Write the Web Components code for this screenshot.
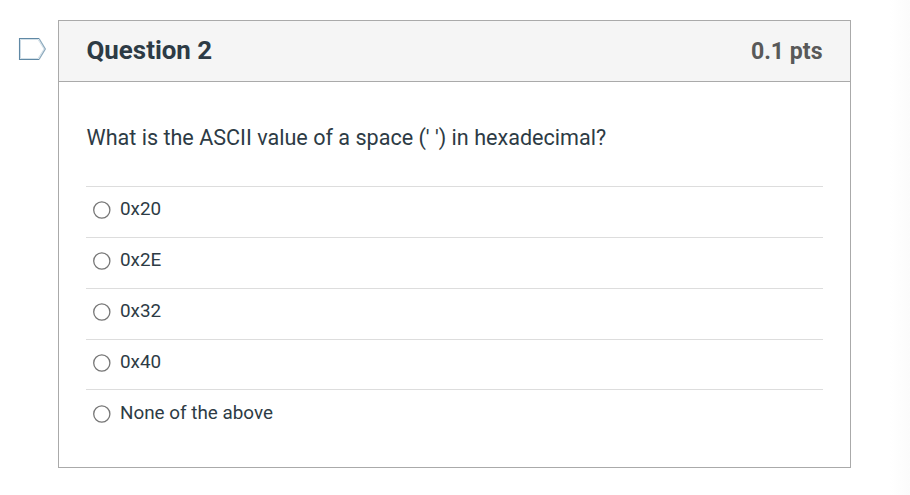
<!DOCTYPE html>
<html lang="en"><head><meta charset="utf-8"><title>Quiz</title>
<style>
body{margin:0;background:#fff;color:#2d3b45;font-family:Roboto,"Liberation Sans",sans-serif;overflow:hidden}
</style></head><body>
<quiz-page>
<quiz-question name="Question 2" points="0.1 pts">
What is the ASCII value of a space (' ') in hexadecimal?
<quiz-answer slot="answers">0x20</quiz-answer>
<quiz-answer slot="answers">0x2E</quiz-answer>
<quiz-answer slot="answers">0x32</quiz-answer>
<quiz-answer slot="answers">0x40</quiz-answer>
<quiz-answer slot="answers">None of the above</quiz-answer>
</quiz-question>
</quiz-page>
<script>
class Base extends HTMLElement{
  connectedCallback(){ if(!this.shadowRoot) this.attachShadow({mode:'open'}).innerHTML=this.view(); }
}
customElements.define('quiz-page',class extends Base{view(){return `
<style>:host{display:grid;grid-template-columns:40px 793px;padding:20px 0 0 18px;box-sizing:border-box;height:495px;align-items:start;background:linear-gradient(90deg,#fff,#fbfbfb) right/20px 100% no-repeat}</style>
<flag-marker></flag-marker><slot></slot>`}});
customElements.define('flag-marker',class extends Base{view(){return `
<style>:host{display:block;padding-top:17px}svg{display:block}</style>
<svg width="29" height="24" viewBox="0 0 29 24" fill="none"><path d="M2.5 2.5H20L26 12L20 21.5H2.5Z" stroke="#d3e0e8"/><path d="M21 1.5L27.3 12L21 22.5" stroke="#8eabbe" stroke-width="1.3"/><path d="M21 1.5H1.5V22.5H21" stroke="#6089a5" stroke-width="1.1"/></svg>`}});
customElements.define('quiz-question',class extends Base{view(){return `
<style>
:host{display:flex;flex-direction:column;box-sizing:border-box;height:448px;border:1px solid #aaa;background:#fff}
header{display:flex;justify-content:space-between;align-items:center;box-sizing:border-box;height:61px;padding:0 27.5px 2px;background:#f5f5f5;border-bottom:1px solid #aaa;font-weight:700}
h2{margin:0;font-size:25.9px;line-height:30px}
.pts{font-size:23.1px;line-height:26px;color:#595959;padding-top:3px}
.text{padding:42px 27.5px 0;font-size:21.58px;line-height:28px;height:62px}
.list{padding:0 27px}
</style>
<header><h2>${this.getAttribute('name')}</h2><span class="pts">${this.getAttribute('points')}</span></header>
<div class="text"><slot></slot></div><div class="list"><slot name="answers"></slot></div>`}});
customElements.define('quiz-answer',class extends Base{view(){return `
<style>
:host{display:flex;align-items:flex-start;box-sizing:border-box;height:51px;border-top:1px solid #ddd;padding:10px 0 0 7px;gap:9px;font-size:18.85px;line-height:24px}
:host(:nth-of-type(4)){height:50px}
:host(:nth-of-type(5)){padding-top:11px}
svg{display:block;width:18px;height:18px;margin-top:4px}
</style><svg viewBox="0 0 18 18"><circle cx="8.8" cy="9" r="8.1" fill="#fff" stroke="#767676" stroke-width="1.3"/></svg><span><slot></slot></span>`}});
</script>
</body></html>
